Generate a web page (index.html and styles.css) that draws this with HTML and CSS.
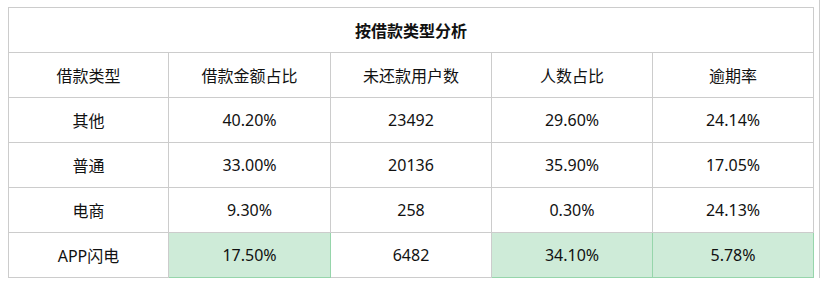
FILE: index.html
```html
<!DOCTYPE html>
<html lang="zh-CN">
<head>
<meta charset="utf-8">
<title>按借款类型分析</title>
<link rel="stylesheet" href="styles.css">
</head>
<body>
<div class="frame">
  <table class="report">
    <colgroup>
      <col class="c1"><col class="c2"><col class="c3"><col class="c4"><col class="c5">
    </colgroup>
    <tr><td class="title" colspan="5">按借款类型分析</td></tr>
    <tr><td>借款类型</td><td>借款金额占比</td><td>未还款用户数</td><td>人数占比</td><td>逾期率</td></tr>
    <tr><td>其他</td><td>40.20%</td><td>23492</td><td>29.60%</td><td>24.14%</td></tr>
    <tr><td>普通</td><td>33.00%</td><td>20136</td><td>35.90%</td><td>17.05%</td></tr>
    <tr><td>电商</td><td>9.30%</td><td>258</td><td>0.30%</td><td>24.13%</td></tr>
    <tr><td>APP闪电</td><td class="hl">17.50%</td><td>6482</td><td class="hl">34.10%</td><td class="hl">5.78%</td></tr>
  </table>
</div>
</body>
</html>
```

FILE: styles.css
```css
html, body {
  margin: 0;
  padding: 0;
  background: #fff;
}

.frame {
  width: 819px;
  height: 278px;
  padding: 7px 0 0 8px;
  box-sizing: border-box;
  border-right: 1px solid #cccccc;
  width: 820px;
}

.report {
  border-collapse: separate;
  border-spacing: 0;
  table-layout: fixed;
  width: 806px;
  border-top: 1px solid #cccccc;
  border-left: 1px solid #cccccc;
  font-family: "Noto Sans", "Noto Sans CJK SC", sans-serif;
  font-size: 16px;
  color: #111;
}

.c1 { width: 160px; }
.c2 { width: 162px; }
.c3 { width: 161px; }
.c4 { width: 161px; }
.c5 { width: 161px; }

.report tr {
  height: 45px;
}

.report td {
  padding: 0;
  text-align: center;
  vertical-align: middle;
  border-right: 1px solid #cccccc;
  border-bottom: 1px solid #cccccc;
  white-space: nowrap;
}

.report td.title {
  font-weight: bold;
}

.report td.hl {
  background: #ceebd8;
  border-right-color: #96d5ab;
  border-bottom-color: #96d5ab;
}
```
